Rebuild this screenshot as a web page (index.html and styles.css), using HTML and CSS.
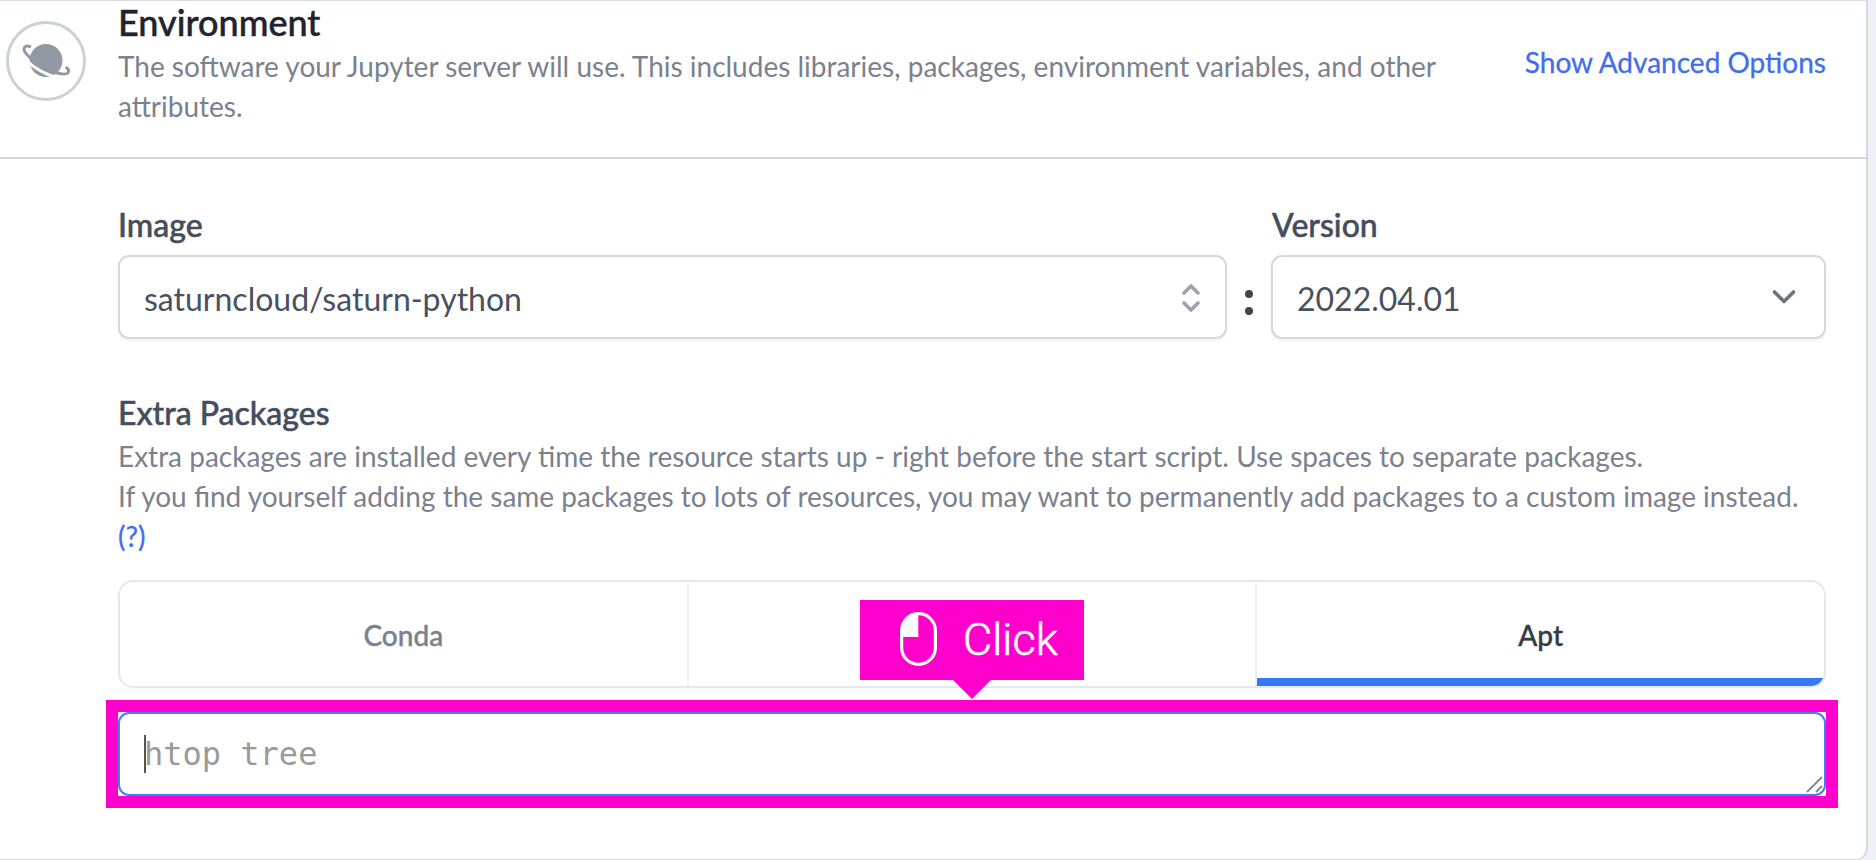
FILE: index.html
```html
<!DOCTYPE html>
<html lang="en">
<head>
<meta charset="utf-8">
<title>Environment</title>
<link rel="stylesheet" href="styles.css">
</head>
<body>
<main class="panel">
  <header class="header">
    <div class="badge">
      <svg width="48" height="36" viewBox="0 0 48 36">
        <circle cx="24" cy="17.5" r="16.5" fill="#9199a5"/>
        <path d="M3 16C12 25.5 23 32 40 36" fill="none" stroke="#fff" stroke-width="3"/>
        <path d="M9 4C4.5 2 1 3.5 2.3 7.5C4 12.5 14 19.5 22 24.5C30 29.3 41 32.5 45 30.5C47.5 29 46.8 25 43.5 24.5" fill="none" stroke="#9199a5" stroke-width="3"/>
      </svg>
    </div>
    <div class="heading">
      <h1 class="title"><span>Environment</span></h1>
      <p class="text">The software your Jupyter server will use. This includes libraries, packages, environment variables, and other<br>attributes.</p>
    </div>
    <a class="advanced">Show Advanced Options</a>
  </header>
  <section class="content">
    <div class="fields">
      <div class="field image">
        <label class="label">Image</label>
        <div class="select"><span class="image-name">saturncloud/saturn-python</span>
          <svg class="updown" width="20" height="32" viewBox="0 0 20 32" fill="none" stroke="#9ca3af" stroke-width="3.6" stroke-linecap="round" stroke-linejoin="round"><path d="M3 11L10 4L17 11M3 21L10 28L17 21"/></svg>
        </div>
      </div>
      <div class="colon"><i></i><i></i></div>
      <div class="field version">
        <label class="label">Version</label>
        <div class="select"><span class="number">2022.04.01</span>
          <svg class="chevron" width="26" height="18" viewBox="0 0 26 18" fill="none" stroke="#6b7280" stroke-width="3.6" stroke-linecap="round" stroke-linejoin="round"><path d="M3.5 4L13 13.5L22.5 4"/></svg>
        </div>
      </div>
    </div>
    <h2 class="label extra"><span>Extra Packages</span></h2>
    <p class="text"><span class="line1">Extra packages are installed every time the resource starts up - right before the start script. Use spaces to separate packages.</span><br><span class="line2">If you find yourself adding the same packages to lots of resources, you may want to permanently add packages to a custom image instead.</span><br><a class="help">(?)</a></p>
    <nav class="tabs">
      <div class="tab">Conda</div>
      <div class="tab"></div>
      <div class="tab active">Apt</div>
      <div class="tip">
        <svg width="37" height="54" viewBox="0 0 37 54"><rect x="1.6" y="1.6" width="33.8" height="50.8" rx="16.9" fill="none" stroke="#fff" stroke-width="3.2"/><path d="M18.3 1V25H1.5V18C1.5 8 9 1 18.3 1Z" fill="#fff"/></svg>
        <span>Click</span>
      </div>
    </nav>
    <div class="highlight">
      <div class="input"><i class="caret"></i><span>htop tree</span>
        <svg class="grip" width="18" height="18" viewBox="0 0 18 18" stroke="#858585" stroke-width="1.8"><path d="M1 16L16 1M10 16L16 10"/></svg>
      </div>
    </div>
  </section>
</main>
</body>
</html>
```
FILE: styles.css
```css
* { box-sizing: border-box; }
body {
  margin: 0;
  height: 860px;
  overflow: hidden;
  background: #f0f1f6;
  font-family: Lato, "Liberation Sans", sans-serif;
}
.panel {
  width: 1868px;
  height: 860px;
  background: #fff;
  border: solid #d5d9e0;
  border-width: 1px 2px 1px 0;
  border-bottom-right-radius: 12px;
}
.header {
  display: flex;
  height: 158px;
  border-bottom: 2px solid #d5d9de;
}
.badge {
  display: flex;
  align-items: center;
  justify-content: center;
  width: 80px;
  height: 80px;
  margin: 20px 32px 0 6px;
  border: 3px solid #cbd0d9;
  border-radius: 50%;
}
.heading { flex: 1; }
h1, h2, p { margin: 0; }
.title {
  height: 45px;
  font-size: 36px;
  line-height: 42px;
  font-weight: 500;
  color: #1f2430;
  -webkit-text-stroke: 0.5px;
}
.text {
  font-size: 28px;
  line-height: 40px;
  color: #7b818e;
  white-space: nowrap;
}
.advanced {
  margin: 41px 40px 0 0;
  font-size: 28px;
  line-height: 40px;
  color: #416eed;
  -webkit-text-stroke: 0.3px;
}
.content { padding: 48px 40px 0 118px; }
.fields { display: flex; }
.image { width: 1109px; }
.version { width: 555px; }
.label {
  display: block;
  height: 48px;
  font-size: 32px;
  line-height: 36px;
  font-weight: 500;
  color: #454d5b;
  -webkit-text-stroke: 0.5px;
}
.version .label { padding-left: 1px; }
.select {
  display: flex;
  align-items: center;
  justify-content: space-between;
  height: 84px;
  padding: 2px 24px 0 24px;
  border: 2px solid #d5d9df;
  border-radius: 11px;
  box-shadow: 0 2px 3px #0000000d;
  font-size: 32px;
  color: #4a515e;
}
.select svg { margin-top: -1px; }
.select .chevron { margin: -2px 3px 0 0; }
.colon {
  display: flex;
  flex-direction: column;
  align-items: center;
  gap: 9px;
  width: 44px;
  padding-top: 83px;
}
.colon i { width: 8px; height: 8px; border-radius: 50%; background: #444; }
.extra { height: 44px; margin-top: 53px; line-height: 42px; }
.help { color: #416eed; -webkit-text-stroke: 0.3px; }
.tabs {
  position: relative;
  display: flex;
  height: 108px;
  margin-top: 24px;
  border: 2px solid #e7e8ed;
  border-radius: 15px;
}
.tab {
  flex: 1;
  display: flex;
  align-items: center;
  justify-content: center;
  padding-top: 2px;
  font-size: 28px;
  font-weight: 500;
  color: #7b818e;
  -webkit-text-stroke: 0.4px;
}
.tab + .tab { border-left: 2px solid #eeeff2; }
.tab.active {
  color: #343b48;
  border-radius: 0 0 13px 0;
  background: linear-gradient(#3478f3, #3478f3) bottom / 100% 8px no-repeat;
}
.tip {
  position: absolute;
  left: 740px;
  top: 18px;
  display: flex;
  align-items: center;
  width: 224px;
  height: 80px;
  padding: 0 0 2px 40px;
  gap: 26px;
  background: #ff00cc;
  color: #fff;
  font: 300 45px/80px Roboto, sans-serif;
  -webkit-text-stroke: 0.6px;
}
.tip::after {
  content: "";
  position: absolute;
  left: 92px;
  top: 79px;
  border: solid transparent;
  border-width: 20px 20px 0;
  border-top-color: #ff00cc;
}
.tip span { padding-top: 2px; }
.highlight {
  margin: 12px -12px 0;
  height: 108px;
  border: 12px solid #ff00cc;
}
.input {
  position: relative;
  display: flex;
  align-items: center;
  height: 84px;
  padding-left: 24px;
  border: 2px solid #3e7ff5;
  border-radius: 11px;
  color: #9a9a9a;
  font: 32px "DejaVu Sans Mono", monospace;
}
.caret { width: 2px; height: 38px; margin-right: -2px; background: #555; }
.grip { position: absolute; right: 0; bottom: 0; fill: none; }
```
